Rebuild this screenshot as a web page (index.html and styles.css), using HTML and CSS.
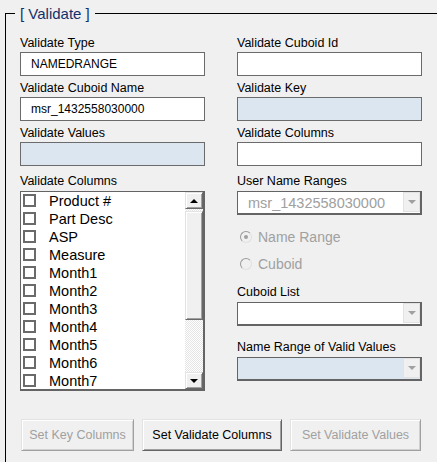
FILE: index.html
```html
<!DOCTYPE html>
<html>
<head>
<meta charset="utf-8">
<link rel="stylesheet" href="styles.css">
</head>
<body>
<fieldset class="frame">
  <legend class="frame-title">[ Validate ]</legend>
  <div class="cols">
    <div class="col">
      <div class="field">
        <div class="lbl">Validate Type</div>
        <div class="tb">NAMEDRANGE</div>
      </div>
      <div class="field">
        <div class="lbl">Validate Cuboid Name</div>
        <div class="tb">msr_1432558030000</div>
      </div>
      <div class="field">
        <div class="lbl">Validate Values</div>
        <div class="tb tb-dis"></div>
      </div>
      <div class="field field-low">
        <div class="lbl">Validate Columns</div>
        <div class="listbox">
          <div class="items">
            <div class="item"><span class="chk"></span><span class="item-text">Product #</span></div>
            <div class="item"><span class="chk"></span><span class="item-text">Part Desc</span></div>
            <div class="item"><span class="chk"></span><span class="item-text">ASP</span></div>
            <div class="item"><span class="chk"></span><span class="item-text">Measure</span></div>
            <div class="item"><span class="chk"></span><span class="item-text">Month1</span></div>
            <div class="item"><span class="chk"></span><span class="item-text">Month2</span></div>
            <div class="item"><span class="chk"></span><span class="item-text">Month3</span></div>
            <div class="item"><span class="chk"></span><span class="item-text">Month4</span></div>
            <div class="item"><span class="chk"></span><span class="item-text">Month5</span></div>
            <div class="item"><span class="chk"></span><span class="item-text">Month6</span></div>
            <div class="item"><span class="chk"></span><span class="item-text">Month7</span></div>
          </div>
          <div class="vscroll">
            <div class="sb-btn"><span class="arr-up"></span></div>
            <div class="sb-thumb"></div>
            <div class="sb-track"></div>
            <div class="sb-btn"><span class="arr-down"></span></div>
          </div>
        </div>
      </div>
    </div>
    <div class="col">
      <div class="field">
        <div class="lbl">Validate Cuboid Id</div>
        <div class="tb"></div>
      </div>
      <div class="field">
        <div class="lbl">Validate Key</div>
        <div class="tb tb-dis"></div>
      </div>
      <div class="field">
        <div class="lbl">Validate Columns</div>
        <div class="tb"></div>
      </div>
      <div class="field field-low">
        <div class="lbl">User Name Ranges</div>
        <div class="combo">
          <div class="combo-text">msr_1432558030000</div>
          <div class="combo-btn"><span class="arr-dis"></span></div>
        </div>
      </div>
      <div class="radio radio-first"><span class="rb rb-on"></span><span>Name Range</span></div>
      <div class="radio radio-second"><span class="rb"></span><span>Cuboid</span></div>
      <div class="field field-cuboid">
        <div class="lbl">Cuboid List</div>
        <div class="combo">
          <div class="combo-text"></div>
          <div class="combo-btn"><span class="arr-dis"></span></div>
        </div>
      </div>
      <div class="field field-range">
        <div class="lbl">Name Range of Valid Values</div>
        <div class="combo combo-dis">
          <div class="combo-text"></div>
          <div class="combo-btn"><span class="arr-dis"></span></div>
        </div>
      </div>
    </div>
  </div>
  <div class="buttons">
    <button class="btn btn-dis btn-key">Set Key Columns</button>
    <button class="btn btn-cols">Set Validate Columns</button>
    <button class="btn btn-dis btn-vals">Set Validate Values</button>
  </div>
</fieldset>
</body>
</html>
```
FILE: styles.css
```css
* { box-sizing: border-box; }
html, body {
  margin: 0;
  padding: 0;
  background: #f0f0f0;
  overflow: hidden;
}
body {
  width: 437px;
  height: 462px;
  font-family: "Liberation Sans", Arial, sans-serif;
  color: #000;
}
.frame {
  margin: 5px 0 0 5px;
  padding: 0;
  border: 0;
  border-top: 1px solid #000;
  border-left: 1px solid #000;
  min-height: 480px;
  min-inline-size: auto;
}
.frame-title {
  margin-left: 9px;
  padding: 0 5px;
  font-size: 15px;
  line-height: 17px;
  color: #14306b;
}
.cols {
  display: grid;
  grid-template-columns: 185px 185px;
  column-gap: 32px;
  margin-top: 14px;
  padding-left: 14px;
}
.col {
  display: flex;
  flex-direction: column;
}
.field + .field { margin-top: 5px; }
.lbl {
  font-size: 12.5px;
  line-height: 15px;
  height: 15px;
  margin-bottom: 1px;
  white-space: nowrap;
}
.tb {
  height: 24px;
  border: 1px solid #6b6b6b;
  background: #fff;
  font-size: 12px;
  line-height: 22px;
  padding-left: 10px;
  white-space: nowrap;
}
.tb-dis { background: #dce6f0; }
.field.field-low { margin-top: 8px; }
.field-low .lbl,
.field-cuboid .lbl,
.field-range .lbl { margin-bottom: 2px; }

/* list box */
.listbox {
  height: 200px;
  border: 1px solid #646464;
  border-right-width: 2px;
  border-bottom-width: 2px;
  background: #fff;
  display: flex;
}
.items {
  flex: 1;
  overflow: hidden;
  padding-left: 2px;
}
.item {
  height: 18px;
  display: flex;
  align-items: flex-start;
  font-size: 14.5px;
  white-space: nowrap;
}
.chk {
  width: 13px;
  height: 13px;
  margin-top: 2px;
  margin-right: 13px;
  border: 2px solid #6a6a6a;
  background: #fff;
  flex: none;
}
.item-text {
  line-height: 14px;
  margin-top: 2px;
}
.vscroll {
  width: 18px;
  display: flex;
  flex-direction: column;
  background-color: #fff;
  background-image: repeating-conic-gradient(#e4e4e4 0 25%, #fff 0 50%);
  background-size: 2px 2px;
}
.sb-btn, .sb-thumb {
  background: #f0f0f0;
  border-top: 1px solid #e3e3e3;
  border-left: 1px solid #e3e3e3;
  border-right: 1px solid #696969;
  border-bottom: 1px solid #696969;
  box-shadow: inset 1px 1px #fff, inset -1px -1px #a0a0a0;
}
.sb-btn {
  height: 17px;
  display: flex;
  align-items: center;
  justify-content: center;
}
.sb-thumb {
  height: 109px;
  margin-top: 2px;
}
.sb-track { flex: 1; }
.arr-up {
  width: 0; height: 0;
  border-left: 4px solid transparent;
  border-right: 4px solid transparent;
  border-bottom: 4px solid #000;
}
.arr-down {
  width: 0; height: 0;
  border-left: 4px solid transparent;
  border-right: 4px solid transparent;
  border-top: 4px solid #000;
}

/* combos */
.combo {
  height: 24px;
  border: 1px solid #646464;
  border-right-width: 2px;
  border-bottom-width: 2px;
  background: #fff;
  display: flex;
}
.combo-dis { background: #dce6f0; }
.combo-text {
  flex: 1;
  padding: 3px 0 0 10px;
  font-size: 14.5px;
  line-height: 17px;
  color: #a0a0a0;
  white-space: nowrap;
  overflow: hidden;
}
.combo-btn {
  width: 17px;
  margin-bottom: 1px;
  background: #f0f0f0;
  border: 1px solid #e2e2e2;
  display: flex;
  align-items: center;
  justify-content: center;
}
.arr-dis {
  width: 0; height: 0;
  border-left: 4px solid transparent;
  border-right: 4px solid transparent;
  border-top: 4px solid #a0a0a0;
}

/* radios */
.radio {
  display: flex;
  align-items: center;
  height: 18px;
  font-size: 14px;
  line-height: 18px;
  color: #a0a0a0;
  padding-left: 3px;
}
.radio-first { margin-top: 13px; }
.radio-second { margin-top: 9px; }
.rb {
  width: 12px;
  height: 12px;
  margin-right: 6px;
  margin-top: -1px;
  border-radius: 50%;
  border: 1px solid;
  border-color: #9a9a9a #e0e0e0 #e0e0e0 #9a9a9a;
  background: #f0f0f0;
  display: flex;
  align-items: center;
  justify-content: center;
  flex: none;
}
.rb-on::after {
  content: "";
  width: 4px;
  height: 4px;
  border-radius: 50%;
  background: #a0a0a0;
}
.field.field-cuboid { margin-top: 12px; }
.field.field-range { margin-top: 14px; }

/* buttons */
.buttons {
  display: flex;
  gap: 8px;
  margin-top: 28px;
  padding-left: 15px;
}
.btn {
  height: 32px;
  padding: 0;
  font-family: "Liberation Sans", Arial, sans-serif;
  font-size: 12.5px;
  color: #000;
  background: #f0f0f0;
  border-top: 1px solid #e3e3e3;
  border-left: 1px solid #e3e3e3;
  border-right: 1px solid #646464;
  border-bottom: 1px solid #646464;
  box-shadow: inset 1px 1px #fff, inset -1px -1px #a0a0a0;
}
.btn-dis {
  color: #a0a0a0;
  border-right-color: #a0a0a0;
  border-bottom-color: #a0a0a0;
  box-shadow: inset 1px 1px #fff, inset -1px -1px #d0d0d0;
}
.btn-key { width: 113px; }
.btn-cols { width: 140px; }
.btn-vals { width: 131px; }
```
